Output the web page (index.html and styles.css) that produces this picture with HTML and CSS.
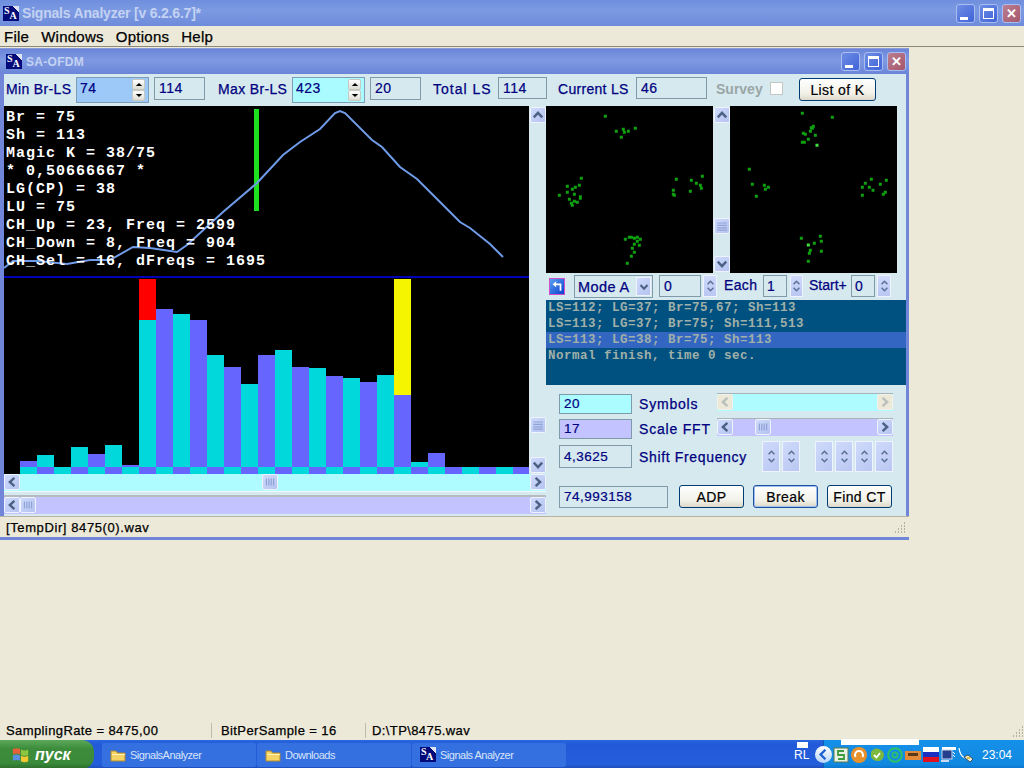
FILE: index.html
```html
<!DOCTYPE html>
<html lang="en">
<head>
    <meta charset="UTF-8">
    <title>Signals Analyzer</title>
    <link rel="stylesheet" href="styles.css">
</head>
<body>
    <svg class="defs">
        <symbol id="chev-up" viewBox="0 0 10 10"><path d="M1.5 7L5 3.2L8.500 7" fill="none" stroke="#4d6185" stroke-width="2"/></symbol>
        <symbol id="chev-down" viewBox="0 0 10 10"><path d="M1.500 3L5 6.800L8.500 3" fill="none" stroke="#4d6185" stroke-width="2"/></symbol>
        <symbol id="chev-left" viewBox="0 0 10 10"><path d="M7 1.500L3.200 5L7 8.500" fill="none" stroke="#4d6185" stroke-width="2"/></symbol>
        <symbol id="chev-right" viewBox="0 0 10 10"><path d="M3 1.500L6.800 5L3 8.500" fill="none" stroke="#4d6185" stroke-width="2"/></symbol>
        <symbol id="grip-h" viewBox="0 0 10 10"><path d="M2 2v6M4 2v6M6 2v6M8 2v6" stroke="#8fa2d8" stroke-width="1"/></symbol>
        <symbol id="grip-v" viewBox="0 0 10 10"><path d="M1 2.500h8M1 4.500h8M1 6.500h8M1 8.500h8" stroke="#8fa2d8" stroke-width="1"/></symbol>
        <symbol id="tri-up" viewBox="0 0 10 6"><path d="M1 5L5 1L9 5z" fill="#000"/></symbol>
        <symbol id="tri-down" viewBox="0 0 10 6"><path d="M1 1L5 5L9 1z" fill="#000"/></symbol>
        <symbol id="arrow-up" viewBox="0 0 10 6"><path d="M1.500 5L5 1.500L8.500 5" fill="none" stroke="#5c6f96" stroke-width="1.800"/></symbol>
        <symbol id="arrow-down" viewBox="0 0 10 6"><path d="M1.500 1L5 4.500L8.500 1" fill="none" stroke="#5c6f96" stroke-width="1.800"/></symbol>
        <symbol id="folder" viewBox="0 0 16 14"><path d="M1 3h5l1.500 2H15v8H1z" fill="#f6d365" stroke="#b08a2e"/><path d="M2 6.500h13" stroke="#fff3b8"/></symbol>
    </svg>

    <div class="app-title">
        <div class="sa-logo"><span>S</span><span>A</span></div>
        <div class="title-text">Signals Analyzer [v 6.2.6.7]*</div>
        <div class="win-btns">
            <div class="win-btn"><span class="ico-min"></span></div>
            <div class="win-btn"><span class="ico-max"></span></div>
            <div class="win-btn close"><span class="ico-close">✕</span></div>
        </div>
    </div>
    <div class="menu">
        <span>File</span><span>Windows</span><span>Options</span><span>Help</span>
    </div>

    <div class="workspace">
        <div class="child">
            <div class="child-title">
                <div class="sa-logo"><span>S</span><span>A</span></div>
                <div class="child-title-text">SA-OFDM</div>
                <div class="win-btns">
                    <div class="win-btn"><span class="ico-min"></span></div>
                    <div class="win-btn"><span class="ico-max"></span></div>
                    <div class="win-btn close"><span class="ico-close">✕</span></div>
                </div>
            </div>

            <div class="toolbar">
                <div class="lbl lbl-min">Min Br-LS</div>
                <div class="spinbox blue">
                    <span>74</span>
                    <div class="mini-spin">
                        <div><svg><use href="#tri-up"/></svg></div>
                        <div><svg><use href="#tri-down"/></svg></div>
                    </div>
                </div>
                <div class="field tb-field">114</div>
                <div class="lbl lbl-max">Max Br-LS</div>
                <div class="spinbox cyan">
                    <span>423</span>
                    <div class="mini-spin">
                        <div><svg><use href="#tri-up"/></svg></div>
                        <div><svg><use href="#tri-down"/></svg></div>
                    </div>
                </div>
                <div class="field tb-field">20</div>
                <div class="lbl lbl-total">Total LS</div>
                <div class="field tb-total">114</div>
                <div class="lbl lbl-current">Current LS</div>
                <div class="field tb-current">46</div>
                <div class="lbl lbl-survey">Survey</div>
                <div class="checkbox"></div>
                <div class="btn btn-list">List of K</div>
            </div>

            <div class="main">
                <div class="left">
                    <div class="plot-row">
                        <div class="plot">
                            <svg class="plot-svg" viewBox="4 106 525 368">
                                <rect class="pu" x="20" y="461" width="17" height="6"/>
                                <rect class="cy" x="37" y="455" width="17" height="12"/>
                                <rect class="cy" x="71" y="447" width="17" height="20"/>
                                <rect class="pu" x="88" y="454" width="17" height="13"/>
                                <rect class="cy" x="105" y="445" width="17" height="22"/>
                                <rect class="pu" x="122" y="465" width="17" height="2"/>
                                <rect class="red" x="139" y="279" width="17" height="41"/>
                                <rect class="cy" x="139" y="320" width="17" height="147"/>
                                <rect class="pu" x="156" y="309" width="17" height="158"/>
                                <rect class="cy" x="173" y="314" width="17" height="153"/>
                                <rect class="pu" x="190" y="320" width="17" height="147"/>
                                <rect class="cy" x="207" y="355" width="17" height="112"/>
                                <rect class="pu" x="224" y="367" width="17" height="100"/>
                                <rect class="cy" x="241" y="384" width="17" height="83"/>
                                <rect class="pu" x="258" y="355" width="17" height="112"/>
                                <rect class="cy" x="275" y="350" width="17" height="117"/>
                                <rect class="pu" x="292" y="367" width="17" height="100"/>
                                <rect class="cy" x="309" y="368" width="17" height="99"/>
                                <rect class="pu" x="326" y="376" width="17" height="91"/>
                                <rect class="cy" x="343" y="378" width="17" height="89"/>
                                <rect class="pu" x="360" y="382" width="17" height="85"/>
                                <rect class="cy" x="377" y="375" width="17" height="92"/>
                                <rect class="yel" x="394" y="279" width="17" height="116"/>
                                <rect class="pu" x="394" y="395" width="17" height="72"/>
                                <rect class="cy" x="411" y="462" width="17" height="5"/>
                                <rect class="pu" x="428" y="453" width="17" height="14"/>

                                <rect class="cy" x="20" y="467" width="17" height="7"/>
                                <rect class="pu" x="37" y="467" width="17" height="7"/>
                                <rect class="cy" x="54" y="467" width="17" height="7"/>
                                <rect class="pu" x="71" y="467" width="17" height="7"/>
                                <rect class="cy" x="88" y="467" width="17" height="7"/>
                                <rect class="pu" x="105" y="467" width="17" height="7"/>
                                <rect class="cy" x="122" y="467" width="17" height="7"/>
                                <rect class="pu" x="139" y="467" width="17" height="7"/>
                                <rect class="cy" x="156" y="467" width="17" height="7"/>
                                <rect class="pu" x="173" y="467" width="17" height="7"/>
                                <rect class="cy" x="190" y="467" width="17" height="7"/>
                                <rect class="pu" x="207" y="467" width="17" height="7"/>
                                <rect class="cy" x="224" y="467" width="17" height="7"/>
                                <rect class="pu" x="241" y="467" width="17" height="7"/>
                                <rect class="cy" x="258" y="467" width="17" height="7"/>
                                <rect class="pu" x="275" y="467" width="17" height="7"/>
                                <rect class="cy" x="292" y="467" width="17" height="7"/>
                                <rect class="pu" x="309" y="467" width="17" height="7"/>
                                <rect class="cy" x="326" y="467" width="17" height="7"/>
                                <rect class="pu" x="343" y="467" width="17" height="7"/>
                                <rect class="cy" x="360" y="467" width="17" height="7"/>
                                <rect class="pu" x="377" y="467" width="17" height="7"/>
                                <rect class="cy" x="394" y="467" width="17" height="7"/>
                                <rect class="pu" x="411" y="467" width="17" height="7"/>
                                <rect class="cy" x="428" y="467" width="17" height="7"/>
                                <rect class="pu" x="445" y="467" width="17" height="7"/>
                                <rect class="cy" x="462" y="467" width="17" height="7"/>
                                <rect class="pu" x="479" y="467" width="17" height="7"/>
                                <rect class="cy" x="496" y="467" width="17" height="7"/>
                                <rect class="pu" x="513" y="467" width="16" height="7"/>

                                <rect class="divider" x="4" y="276" width="525" height="2"/>
                                <rect class="marker" x="254" y="109" width="5" height="102"/>
                                <polyline class="curve" points="4,268 13,261 37,261 67,264 90,260 110,260 133,247 150,248 177,252 187,245 223,212 257,183 283,155 300,142 320,129 335,113 340,111 345,113 372,140 382,147 400,167 417,179 438,200 460,222 470,228 490,244 503,257"/>
                            </svg>
                            <div class="plot-text">
                                <div>Br = 75</div>
                                <div>Sh = 113</div>
                                <div>Magic K = 38/75</div>
                                <div>* 0,50666667 *</div>
                                <div>LG(CP) = 38</div>
                                <div>LU = 75</div>
                                <div>CH_Up = 23, Freq = 2599</div>
                                <div>CH_Down = 8, Freq = 904</div>
                                <div>CH_Sel = 16, dFreqs = 1695</div>
                            </div>
                        </div>
                        <div class="vscroll plot-scroll">
                            <div class="sb-btn"><svg><use href="#chev-up"/></svg></div>
                            <div class="sb-fill plot-fill-a"></div>
                            <div class="sb-btn"><svg><use href="#grip-v"/></svg></div>
                            <div class="sb-fill plot-fill-b"></div>
                            <div class="sb-btn"><svg><use href="#chev-down"/></svg></div>
                        </div>
                    </div>
                    <div class="hscroll sb-cyan">
                        <div class="sb-btn"><svg><use href="#chev-left"/></svg></div>
                        <div class="sb-fill hs-a"></div>
                        <div class="sb-btn"><svg><use href="#grip-h"/></svg></div>
                        <div class="sb-fill"></div>
                        <div class="sb-btn"><svg><use href="#chev-right"/></svg></div>
                    </div>
                    <div class="scroll-gap"></div>
                    <div class="hscroll sb-lav">
                        <div class="sb-btn"><svg><use href="#chev-left"/></svg></div>
                        <div class="sb-btn"><svg><use href="#grip-h"/></svg></div>
                        <div class="sb-fill"></div>
                        <div class="sb-btn"><svg><use href="#chev-right"/></svg></div>
                    </div>
                </div>

                <div class="right">
                    <div class="scatter-row">
                        <svg class="scatter" viewBox="18 18 501 501">
                            <path class="dots" d="M196 49h0M229 94h0M250 88h0M253 97h0M265 94h0M286 85h0M244 112h0M124 235h0M82 259h0M97 268h0M106 262h0M118 256h0M82 277h0M58 286h0M103 283h0M121 290h0M121 295h0M88 298h0M103 304h0M112 307h0M94 310h0M97 316h0M409 238h0M454 241h0M487 229h0M469 250h0M481 256h0M484 265h0M400 271h0M451 274h0M400 283h0M403 286h0M256 418h0M268 412h0M274 412h0M283 415h0M292 412h0M301 418h0M292 424h0M283 433h0M298 436h0M277 445h0M283 457h0M274 469h0M262 490h0"/>
                        </svg>
                        <div class="vscroll">
                            <div class="sb-btn"><svg><use href="#chev-up"/></svg></div>
                            <div class="sb-fill scatter-fill-a"></div>
                            <div class="sb-btn"><svg><use href="#grip-v"/></svg></div>
                            <div class="sb-fill"></div>
                            <div class="sb-btn"><svg><use href="#chev-down"/></svg></div>
                        </div>
                        <svg class="scatter" viewBox="570 18 501 501">
                            <path class="dots" d="M787 40h0M877 52h0M814 83h0M820 79h0M817 85h0M811 94h0M790 100h0M796 103h0M826 106h0M805 118h0M787 127h0M793 127h0M628 208h0M637 253h0M673 256h0M685 262h0M676 268h0M649 289h0M994 238h0M1039 241h0M976 250h0M1021 253h0M967 262h0M988 262h0M999 271h0M1036 277h0M1030 283h0M967 286h0M841 409h0M784 415h0M844 424h0M823 430h0M811 451h0M808 460h0M844 454h0M805 484h0"/>
                            <path class="dots bright" d="M831 136h0M805 435h0"/>
                        </svg>
                    </div>

                    <div class="mode-row">
                        <div class="undo-btn">
                            <svg viewBox="0 0 16 16"><path d="M11 12.500h1V6H5" fill="none" stroke="#fff" stroke-width="2"/><path d="M7 2.500L3 6L7 9.500z" fill="#fff"/></svg>
                        </div>
                        <div class="combo">
                            <span>Mode A</span>
                            <div class="combo-btn"><svg><use href="#chev-down"/></svg></div>
                        </div>
                        <div class="field mode-field-a">0</div>
                        <div class="spin spin-a">
                            <svg><use href="#arrow-up"/></svg>
                            <svg><use href="#arrow-down"/></svg>
                        </div>
                        <div class="lbl lbl-each">Each</div>
                        <div class="field mode-field-b">1</div>
                        <div class="spin spin-b">
                            <svg><use href="#arrow-up"/></svg>
                            <svg><use href="#arrow-down"/></svg>
                        </div>
                        <div class="lbl lbl-start">Start+</div>
                        <div class="field mode-field-b">0</div>
                        <div class="spin spin-a">
                            <svg><use href="#arrow-up"/></svg>
                            <svg><use href="#arrow-down"/></svg>
                        </div>
                    </div>

                    <div class="log">
                        <div>LS=112; LG=37; Br=75,67; Sh=113</div>
                        <div>LS=113; LG=37; Br=75; Sh=111,513</div>
                        <div class="selected">LS=113; LG=38; Br=75; Sh=113</div>
                        <div>Normal finish, time 0 sec.</div>
                    </div>

                    <div class="controls">
                        <div class="ctl-row">
                            <div class="field ctl-field cyan">20</div>
                            <div class="lbl ctl-lbl">Symbols</div>
                            <div class="hscroll ctl-scroll sb-cyan disabled">
                                <div class="sb-btn"><svg><use href="#chev-left"/></svg></div>
                                <div class="sb-fill"></div>
                                <div class="sb-btn"><svg><use href="#chev-right"/></svg></div>
                            </div>
                        </div>
                        <div class="ctl-row">
                            <div class="field ctl-field lav">17</div>
                            <div class="lbl ctl-lbl">Scale FFT</div>
                            <div class="hscroll ctl-scroll sb-lav">
                                <div class="sb-btn"><svg><use href="#chev-left"/></svg></div>
                                <div class="sb-fill ctl-fill"></div>
                                <div class="sb-btn"><svg><use href="#grip-h"/></svg></div>
                                <div class="sb-fill"></div>
                                <div class="sb-btn"><svg><use href="#chev-right"/></svg></div>
                            </div>
                        </div>
                        <div class="ctl-row shift-row">
                            <div class="field ctl-field shift-field">4,3625</div>
                            <div class="lbl shift-lbl">Shift Frequency</div>
                            <div class="tall-spin"><svg><use href="#arrow-up"/></svg><svg><use href="#arrow-down"/></svg></div>
                            <div class="tall-spin"><svg><use href="#arrow-up"/></svg><svg><use href="#arrow-down"/></svg></div>
                            <div class="tall-spin spin-gap"><svg><use href="#arrow-up"/></svg><svg><use href="#arrow-down"/></svg></div>
                            <div class="tall-spin"><svg><use href="#arrow-up"/></svg><svg><use href="#arrow-down"/></svg></div>
                            <div class="tall-spin"><svg><use href="#arrow-up"/></svg><svg><use href="#arrow-down"/></svg></div>
                            <div class="tall-spin"><svg><use href="#arrow-up"/></svg><svg><use href="#arrow-down"/></svg></div>
                        </div>
                        <div class="ctl-row result-row">
                            <div class="field result-field">74,993158</div>
                            <div class="btn btn-adp">ADP</div>
                            <div class="btn btn-break">Break</div>
                            <div class="btn btn-find">Find CT</div>
                        </div>
                    </div>
                </div>
            </div>

            <div class="child-status">
                <span>[TempDir] 8475(0).wav</span>
                <svg class="resize-grip" viewBox="0 0 12 12"><path d="M10 2h1M7 5h1M10 5h1M4 8h1M7 8h1M10 8h1M1 11h1M4 11h1M7 11h1M10 11h1" stroke="#b5b2a2" stroke-width="2"/></svg>
            </div>
        </div>
    </div>

    <div class="app-status">
        <div class="status-cell cell-a">SamplingRate = 8475,00</div>
        <div class="status-cell cell-b">BitPerSample = 16</div>
        <div class="status-cell">D:\TP\8475.wav</div>
        <svg class="resize-grip" viewBox="0 0 12 12"><path d="M10 2h1M7 5h1M10 5h1M4 8h1M7 8h1M10 8h1M1 11h1M4 11h1M7 11h1M10 11h1" stroke="#b5b2a2" stroke-width="2"/></svg>
    </div>

    <div class="taskbar">
        <div class="start">
            <svg class="flag" viewBox="0 0 20 18">
                <path d="M1 3q4-2 8 0v6q-4-2-8 0z" fill="#e8603a"/>
                <path d="M10 3.500q4 2 8 0v6q-4 2-8 0z" fill="#8fc63f"/>
                <path d="M1 10q4-2 8 0v6q-4-2-8 0z" fill="#5a8ee0"/>
                <path d="M10 10.500q4 2 8 0v6q-4 2-8 0z" fill="#f5c92f"/>
            </svg>
            <span>пуск</span>
        </div>
        <div class="task task-a"><svg class="task-ico"><use href="#folder"/></svg>SignalsAnalyzer</div>
        <div class="task task-b"><svg class="task-ico"><use href="#folder"/></svg>Downloads</div>
        <div class="task task-c"><div class="sa-logo"><span>S</span><span>A</span></div>Signals Analyzer</div>
        <div class="lang">RL</div>
        <div class="tray">
            <div class="tray-chev"><svg viewBox="0 0 18 18"><path d="M11 4L6 9L11 14" fill="none" stroke="#1a5fd0" stroke-width="2.500"/></svg></div>
            <svg class="tray-ico" viewBox="0 0 16 16"><rect x="1" y="1" width="14" height="14" fill="#e9f2e2" stroke="#5a7a4a"/><path d="M11 4H5v4h6v4H5" fill="none" stroke="#3f9b3f" stroke-width="1.800"/></svg>
            <svg class="tray-ico" viewBox="0 0 16 16"><circle cx="8" cy="8" r="8" fill="#e8902a"/><path d="M4.500 10A4 4 0 1 1 11.500 10" fill="none" stroke="#fff" stroke-width="2"/></svg>
            <svg class="tray-ico" viewBox="0 0 16 16"><path d="M2 5q3-5 8-3t5 6q-1 6-6 6t-7-4z" fill="#7cb83c"/><path d="M5 8l2.500 2.500L11 6" fill="none" stroke="#fff" stroke-width="1.800"/></svg>
            <svg class="tray-ico" viewBox="0 0 16 16"><circle cx="8" cy="8" r="6.800" fill="none" stroke="#2fc06a" stroke-width="2"/><circle cx="8" cy="8" r="2.600" fill="none" stroke="#2fc06a" stroke-width="1.800"/></svg>
            <svg class="tray-ico" viewBox="0 0 16 16"><rect x="0" y="4" width="16" height="9" fill="#e08a3a"/><rect x="3" y="6" width="10" height="3" fill="#5a3a1a"/></svg>
            <div class="ru-flag"><div></div><div></div><div></div></div>
            <svg class="tray-ico" viewBox="0 0 16 16"><rect x="2" y="0" width="14" height="3" fill="#fff"/><rect x="2" y="3" width="10" height="9" fill="#24408c" stroke="#cfd8ee"/><rect x="1" y="13" width="8" height="2" fill="#cfd8ee"/><path d="M13 5l2 2M13 8l2 2" stroke="#fff"/></svg>
            <svg class="tray-ico" viewBox="0 0 16 16"><path d="M1 1q1 8 6 10" fill="none" stroke="#fff" stroke-width="1.200"/><path d="M6 10l4-2l5 4l-3 3z" fill="#f0eee0" stroke="#333" stroke-width=".8"/><rect x="9" y="10" width="3" height="2" fill="#e0c040"/></svg>
            <div class="clock">23:04</div>
        </div>
        <div class="lang-glitch"></div>
        <div class="tray-glitch"></div>
    </div>
</body>
</html>
```

FILE: styles.css
```css
* {
    margin: 0;
    padding: 0;
    box-sizing: border-box;
}

html, body {
    width: 1024px;
    height: 768px;
    overflow: hidden;
}

body {
    display: flex;
    flex-direction: column;
    background-color: #ece9d8;
    font-family: "Liberation Sans", Arial, sans-serif;
    font-size: 14px;
    color: #000080;
}

.defs {
    display: none;
}

svg {
    display: block;
}

/* main window chrome */
.app-title {
    display: flex;
    align-items: center;
    flex: 0 0 26px;
    padding-left: 3px;
    background: linear-gradient(#6f8edd, #7c9ae2 40%, #6d8bda);
}

.title-text {
    margin-left: 3px;
    font-size: 14px;
    font-weight: bold;
    letter-spacing: -0.2px;
    color: #c3d2f2;
}

.sa-logo {
    display: flex;
    flex: 0 0 16px;
    width: 16px;
    height: 15px;
    background: linear-gradient(to top right, #000a78 80%, #dfe4f5 80%);
    color: #fff;
    font-family: "Liberation Serif", serif;
    font-size: 10px;
    font-weight: bold;
    line-height: 10px;
}

.sa-logo span:first-child {
    align-self: flex-start;
    margin-left: 1px;
}

.sa-logo span:last-child {
    align-self: flex-end;
}

.win-btns {
    display: flex;
    gap: 4px;
    margin-left: auto;
    margin-right: 3px;
}

.win-btn {
    display: flex;
    align-items: center;
    justify-content: center;
    width: 19px;
    height: 19px;
    border: 1px solid #a9bdf0;
    border-radius: 3px;
    background: linear-gradient(135deg, #6f8ee4, #3f63d8);
}

.win-btn.close {
    background: linear-gradient(135deg, #bb7f90, #a5566c);
}

.ico-min {
    align-self: flex-end;
    width: 8px;
    height: 3px;
    margin: 0 4px 2px 0;
    background-color: #fff;
}

.ico-max {
    width: 11px;
    height: 11px;
    border: 1px solid #fff;
    border-top-width: 3px;
}

.ico-close {
    color: #fff;
    font-size: 13px;
    font-weight: bold;
    line-height: 1;
}

.menu {
    display: flex;
    flex: 0 0 20px;
    gap: 12px;
    align-items: center;
    padding-left: 4px;
    color: #000;
    font-size: 15px;
    letter-spacing: 0.25px;
    -webkit-text-stroke: 0.25px;
}

/* mdi area */
.workspace {
    flex: 0 0 675px;
    padding-top: 1px;
    border-top: 1px solid #8a887c;
}

.child {
    width: 909px;
    border: solid #7186d8;
    border-width: 0 3px 3px 4px;
    background-color: #d6e9ee;
}

.child-title {
    display: flex;
    align-items: center;
    height: 26px;
    margin: 0 -3px 0 -4px;
    padding-left: 6px;
    border-top: 1px solid #8a9ad8;
    background: linear-gradient(#6a85d8, #7f9ae2 45%, #6a85d8);
}

.child-title-text {
    margin-left: 4px;
    font-size: 12px;
    font-weight: bold;
    letter-spacing: 0.3px;
    color: #c3d2f2;
}

/* toolbar */
.toolbar {
    display: flex;
    align-items: flex-start;
    height: 32px;
    padding-top: 3px;
}

.lbl {
    line-height: 25px;
    letter-spacing: 0.35px;
    white-space: nowrap;
    color: #000080;
    -webkit-text-stroke: 0.25px;
}

.lbl-min { width: 70px; margin-left: 2px; }
.lbl-max { width: 74px; margin-left: 13px; }
.lbl-total { width: 65px; margin-left: 12px; letter-spacing: 1px; }
.lbl-current { width: 78px; margin-left: 11px; letter-spacing: 0.3px; }
.lbl-survey { width: 54px; margin-left: 9px; color: #9aa6a6; font-weight: bold; letter-spacing: 0; -webkit-text-stroke: 0; }

.field {
    padding-left: 4px;
    border: 1px solid #7f9aa8;
    line-height: 21px;
    letter-spacing: 0.5px;
    color: #000080;
    -webkit-text-stroke: 0.2px;
}

.tb-field { width: 51px; height: 23px; margin-left: 5px; }
.tb-total { width: 49px; height: 22px; }
.tb-current { width: 71px; height: 22px; }

.spinbox {
    display: flex;
    align-items: center;
    justify-content: space-between;
    width: 73px;
    height: 26px;
    padding: 0 3px;
    border: 1px solid #7f9db9;
    letter-spacing: 0.5px;
    line-height: 22px;
    -webkit-text-stroke: 0.2px;
}

.spinbox span {
    padding-bottom: 5px;
}

.spinbox.blue { background-color: #9cc9f7; }
.spinbox.cyan { background-color: #a9fbff; }

.mini-spin div {
    display: flex;
    align-items: center;
    justify-content: center;
    width: 13px;
    height: 11px;
    border: 1px solid #c8c8c0;
    border-radius: 2px;
    background: linear-gradient(#fff, #dcdcd2);
}

.mini-spin svg {
    width: 8px;
    height: 5px;
}

.checkbox {
    width: 13px;
    height: 13px;
    margin-top: 5px;
    border: 1px solid #c3c7bd;
    background-color: #fff;
}

.btn {
    display: flex;
    align-items: center;
    justify-content: center;
    height: 23px;
    border: 1px solid #003c74;
    border-radius: 3px;
    background: linear-gradient(#fff, #f2f1e8 70%, #dcd8c8);
    color: #000;
    letter-spacing: 0.4px;
    -webkit-text-stroke: 0.2px;
}

.btn-list { width: 77px; margin: 1px 0 0 16px; }

/* plot side */
.main {
    display: flex;
    height: 410px;
}

.left {
    flex: 0 0 542px;
}

.plot-row {
    display: flex;
    height: 368px;
}

.plot {
    position: relative;
    flex: 0 0 525px;
    background-color: #000;
}

.plot-svg {
    width: 525px;
    height: 368px;
}

.cy { fill: #00d8dc; }
.pu { fill: #6666ff; }
.red { fill: #ff0000; }
.yel { fill: #f5f500; }
.divider { fill: #0000b8; }
.marker { fill: #1fe01f; }

.curve {
    fill: none;
    stroke: #6f9be8;
    stroke-width: 2;
}

.plot-text {
    position: absolute;
    top: 3px;
    left: 2px;
    color: #fff;
    font-family: "Liberation Mono", monospace;
    font-size: 15px;
    font-weight: bold;
    letter-spacing: 1px;
    line-height: 18px;
    white-space: nowrap;
}

/* scrollbars */
.vscroll {
    display: flex;
    flex-direction: column;
    align-items: center;
    flex: 0 0 17px;
    padding: 1px 0;
    background-color: #d6e9ee;
}

.hscroll {
    display: flex;
    align-items: stretch;
    height: 17px;
}

.sb-cyan { background-color: #aefcff; }
.sb-lav { background-color: #c3c3ff; }

.sb-btn {
    display: flex;
    align-items: center;
    justify-content: center;
    flex: 0 0 16px;
    height: 16px;
    width: 16px;
    border: 1px solid #eef3ff;
    border-radius: 2px;
    background: linear-gradient(135deg, #cfdafb, #b4c3f0);
}

.sb-btn svg {
    width: 12px;
    height: 12px;
}

.sb-fill {
    flex: 1;
}

.plot-fill-a { flex: 0 0 294px; }
.plot-fill-b { flex: 0 0 24px; }
.scatter-fill-a { flex: 0 0 95px; }
.hs-a { flex: 0 0 242px; }
.ctl-fill { flex: 0 0 22px; }

.scroll-gap {
    height: 6px;
    border-top: 1px solid #f3f9fa;
    border-bottom: 2px solid #b4bcc0;
}

/* scatter and right column */
.right {
    flex: 0 0 360px;
}

.scatter-row {
    display: flex;
    height: 167px;
}

.scatter {
    flex: 0 0 167px;
    width: 167px;
    height: 167px;
    background-color: #000;
}

.dots {
    fill: none;
    stroke: #0ea00e;
    stroke-width: 9;
    stroke-linecap: square;
}

.dots.bright {
    stroke: #3fe03f;
}

.mode-row {
    display: flex;
    align-items: flex-start;
    height: 27px;
    padding-top: 2px;
}

.undo-btn {
    width: 16px;
    height: 17px;
    margin: 3px 0 0 3px;
    border: 1px solid #d050c8;
    background: linear-gradient(135deg, #5aa0f0, #0a3ed0);
}

.combo {
    display: flex;
    align-items: center;
    justify-content: space-between;
    width: 79px;
    height: 23px;
    margin: 0 0 0 9px;
    padding: 0 1px 0 3px;
    border: 1px solid #7f9aa8;
    font-size: 14.5px;
    letter-spacing: 0.4px;
    -webkit-text-stroke: 0.25px;
}

.combo-btn {
    display: flex;
    align-items: center;
    justify-content: center;
    width: 15px;
    height: 19px;
    border: 1px solid #eef3ff;
    background: linear-gradient(135deg, #cfdafb, #b4c3f0);
}

.combo-btn svg {
    width: 10px;
    height: 10px;
}

.mode-field-a { width: 42px; height: 22px; margin-left: 6px; }
.mode-field-b { width: 24px; height: 22px; padding-left: 3px; }

.spin {
    display: flex;
    flex-direction: column;
    align-items: center;
    justify-content: space-between;
    height: 22px;
    padding: 4px 0;
    border: 1px solid #eef3ff;
    background: linear-gradient(#cfdafb, #b9c7f2);
}

.spin svg {
    width: 9px;
    height: 5px;
}

.spin-a { width: 14px; margin-left: 2px; }
.spin-b { width: 13px; margin-left: 3px; }

.lbl-each { width: 39px; margin-left: 7px; line-height: 21px; }
.lbl-start { width: 42px; margin-left: 6px; line-height: 21px; letter-spacing: 0; }

.log {
    height: 85px;
    background-color: #005080;
    color: #a0b0a8;
    font-family: "Liberation Mono", monospace;
    font-size: 12.5px;
    font-weight: bold;
    letter-spacing: 0.5px;
    line-height: 16px;
}

.log div {
    padding-left: 2px;
}

.log .selected {
    background-color: #3366c0;
}

.controls {
    padding: 8px 0 0 13px;
}

.ctl-row {
    display: flex;
    align-items: flex-start;
    height: 25px;
}

.ctl-field {
    width: 73px;
    height: 20px;
    margin-top: 1px;
    line-height: 18px;
    font-size: 13.5px;
}

.ctl-field.cyan { background-color: #aafcff; }
.ctl-field.lav { background-color: #c3c3ff; }

.ctl-lbl {
    width: 78px;
    margin-left: 7px;
    line-height: 22px;
    letter-spacing: 0.8px;
}

.ctl-scroll {
    width: 176px;
    height: 18px;
    border-top: 1px solid #a8b4b8;
}

.disabled .sb-btn {
    border-color: #f2f2ea;
    background: #ece9d8;
}

.disabled .sb-btn svg {
    opacity: 0.3;
}

.shift-row {
    align-items: center;
    height: 31px;
    margin-top: -2px;
}

.shift-field {
    height: 23px;
    margin-top: 0;
    line-height: 21px;
}

.shift-lbl {
    width: 123px;
    margin-left: 7px;
    line-height: 22px;
    letter-spacing: 0.65px;
}

.tall-spin {
    display: flex;
    flex-direction: column;
    align-items: center;
    justify-content: space-between;
    width: 18px;
    height: 31px;
    margin-right: 2px;
    padding: 8px 0;
    border: 1px solid #eef3ff;
    background: linear-gradient(135deg, #cfdafb, #b9c7f2);
}

.tall-spin svg {
    width: 9px;
    height: 5px;
}

.spin-gap {
    margin-left: 13px;
}

.result-row {
    height: 24px;
    margin-top: 13px;
}

.result-field {
    width: 109px;
    height: 22px;
    margin-top: 1px;
    line-height: 20px;
    font-size: 13.5px;
}

.btn-adp { width: 65px; margin-left: 11px; }
.btn-break { width: 65px; margin-left: 9px; border-color: #2050a0; box-shadow: inset 0 0 0 1px #9cc0f0; }
.btn-find { width: 65px; margin-left: 9px; }

.child-status {
    display: flex;
    align-items: center;
    justify-content: space-between;
    height: 21px;
    margin: 0 -3px 0 -4px;
    padding: 0 3px 0 6px;
    border-top: 1px solid #b8b4a4;
    background-color: #ece9d8;
    color: #000;
    font-size: 13px;
    letter-spacing: 0.6px;
    -webkit-text-stroke: 0.25px;
}

.resize-grip {
    width: 12px;
    height: 12px;
}

/* bottom of main window */
.app-status {
    display: flex;
    align-items: center;
    flex: 0 0 19px;
    color: #000;
    font-size: 13px;
    letter-spacing: 0.4px;
    -webkit-text-stroke: 0.25px;
}

.status-cell {
    padding-left: 6px;
    white-space: nowrap;
}

.cell-a { width: 212px; border-right: 1px solid #c0bcac; }
.cell-b { width: 154px; padding-left: 9px; border-right: 1px solid #c0bcac; }

.app-status .resize-grip {
    margin-left: auto;
}

.taskbar {
    position: relative;
    display: flex;
    align-items: center;
    flex: 0 0 29px;
    background: linear-gradient(#2a66e0, #2259d8 15%, #245edb 85%, #1c48b0);
}

.start {
    display: flex;
    align-items: center;
    gap: 5px;
    width: 94px;
    height: 29px;
    margin-right: 8px;
    padding-left: 12px;
    border-radius: 0 12px 12px 0;
    background: linear-gradient(#5da85a, #3c8c3c 30%, #3a8a3a 80%, #2a6a2a);
    color: #fff;
    font-size: 16px;
    font-style: italic;
    font-weight: bold;
}

.flag {
    width: 18px;
    height: 17px;
}

.task {
    display: flex;
    align-items: center;
    gap: 4px;
    height: 24px;
    padding-left: 8px;
    border-radius: 2px;
    background-color: #3470e0;
    color: #d8e4f8;
    font-size: 11px;
    letter-spacing: -0.5px;
    white-space: nowrap;
}

.task-a { width: 154px; margin-right: 1px; }
.task-b { width: 154px; margin-right: 1px; }
.task-c { width: 154px; }

.task-ico {
    width: 16px;
    height: 14px;
}

.lang {
    margin-left: 228px;
    color: #fff;
    font-size: 12px;
}

.tray {
    display: flex;
    align-items: center;
    width: 201px;
    height: 29px;
    margin-left: auto;
    background: linear-gradient(#1590e8, #1088e0 85%, #0c70c8);
    border-left: 1px solid #0c5cb8;
}

.tray-chev {
    flex: 0 0 17px;
    height: 17px;
    margin: 0 1px 0 -9px;
    border-radius: 50%;
    background: linear-gradient(#fff, #b8d4f8);
}

.tray-ico {
    flex: 0 0 16px;
    width: 16px;
    height: 16px;
    margin-right: 2px;
}

.ru-flag {
    flex: 0 0 16px;
    height: 15px;
    margin-right: 1px;
}

.ru-flag div { height: 5px; }
.ru-flag div:nth-child(1) { background-color: #fff; }
.ru-flag div:nth-child(2) { background-color: #1a2fc0; }
.ru-flag div:nth-child(3) { background-color: #e01020; }

.clock {
    margin-left: 6px;
    color: #fff;
    font-size: 12px;
}

.lang-glitch {
    position: absolute;
    top: 2px;
    left: 797px;
    width: 11px;
    height: 6px;
    background-color: #fff;
}

.tray-glitch {
    position: absolute;
    top: -1px;
    left: 841px;
    width: 78px;
    height: 6px;
    background-color: #fff;
}
```
